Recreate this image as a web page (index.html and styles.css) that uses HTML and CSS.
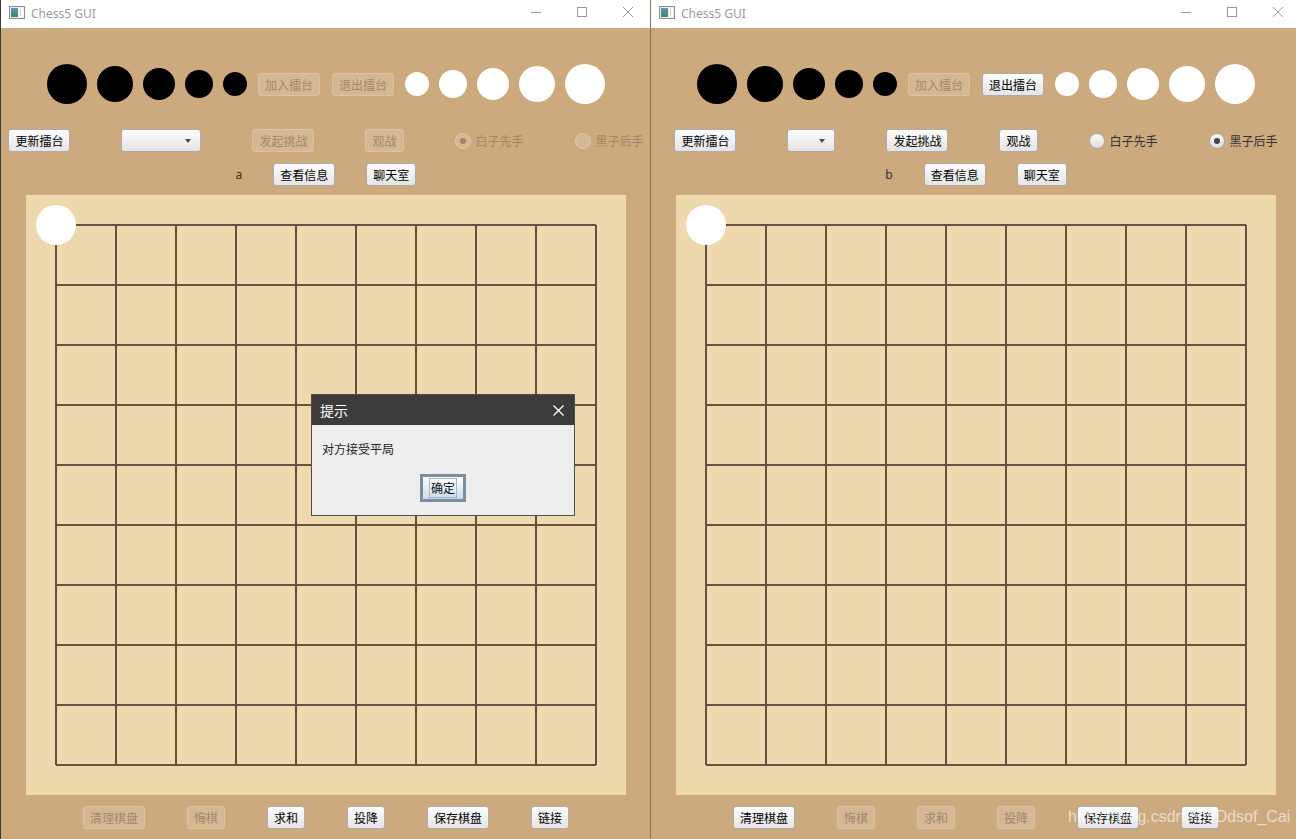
FILE: index.html
```html
<!DOCTYPE html>
<html>
<head>
<meta charset="utf-8">
<title>Chess5 GUI</title>
<link rel="stylesheet" href="styles.css">
</head>
<body>
<div class="desktop">

  <div class="window win-left">
    <div class="titlebar">
      <svg class="appicon" width="16" height="13" viewBox="0 0 16 13"><defs><linearGradient id="ig1" x1="0" y1="0" x2="0" y2="1"><stop offset="0" stop-color="#5a94c8"/><stop offset="1" stop-color="#3b8a58"/></linearGradient></defs><rect x="0.5" y="0.5" width="15" height="12" fill="#eeeeee" stroke="#8e8e8e"/><rect x="2" y="2" width="7" height="9" fill="url(#ig1)"/><rect x="10" y="2" width="4" height="9" fill="#ffffff"/><rect x="11" y="3" width="1" height="7" fill="#c8c8c8"/></svg>
      <span class="title">Chess5 GUI</span>
      <div class="caption">
        <span class="cap"><svg width="10" height="10" viewBox="0 0 10 10"><path d="M0 5.5H10" stroke="#9a9a9a" stroke-width="1"/></svg></span>
        <span class="cap"><svg width="10" height="10" viewBox="0 0 10 10"><rect x="0.5" y="0.5" width="9" height="9" fill="none" stroke="#9a9a9a" stroke-width="1"/></svg></span>
        <span class="cap"><svg width="10" height="10" viewBox="0 0 10 10"><path d="M0 0L10 10M10 0L0 10" stroke="#9a9a9a" stroke-width="1"/></svg></span>
      </div>
    </div>
    <div class="panel">
      <div class="row stones-row">
        <span class="stone black s40"></span>
        <span class="stone black s36"></span>
        <span class="stone black s32"></span>
        <span class="stone black s28"></span>
        <span class="stone black s24"></span>
        <button class="btn pad disabled">加入擂台</button>
        <button class="btn pad disabled">退出擂台</button>
        <span class="stone white s24"></span>
        <span class="stone white s28"></span>
        <span class="stone white s32"></span>
        <span class="stone white s36"></span>
        <span class="stone white s40"></span>
      </div>
      <div class="row controls-row">
        <button class="btn">更新擂台</button>
        <div class="combo wide"><span class="arrow"></span></div>
        <button class="btn disabled">发起挑战</button>
        <button class="btn disabled">观战</button>
        <label class="radio disabled checked"><span class="circle"><span class="dot"></span></span>白子先手</label>
        <label class="radio disabled"><span class="circle"><span class="dot"></span></span>黑子后手</label>
      </div>
      <div class="row info-row">
        <span class="name">a</span>
        <button class="btn">查看信息</button>
        <button class="btn">聊天室</button>
      </div>
      <div class="board">
        <svg class="grid" width="600" height="600" viewBox="0 0 600 600"><path d="M30 30V570M90 30V570M150 30V570M210 30V570M270 30V570M330 30V570M390 30V570M450 30V570M510 30V570M570 30V570M30 30H570M30 90H570M30 150H570M30 210H570M30 270H570M30 330H570M30 390H570M30 450H570M30 510H570M30 570H570" stroke="#63523e" stroke-width="2" fill="none"/></svg>
        <span class="stone white s40 corner"></span>
      </div>
      <div class="row bottom-row">
        <button class="btn disabled">清理棋盘</button>
        <button class="btn disabled">悔棋</button>
        <button class="btn">求和</button>
        <button class="btn">投降</button>
        <button class="btn">保存棋盘</button>
        <button class="btn">链接</button>
      </div>
    </div>

    <div class="dialog">
      <div class="dlg-title">
        <span>提示</span>
        <svg class="dlg-close" width="11" height="11" viewBox="0 0 11 11"><path d="M0.5 0.5L10.5 10.5M10.5 0.5L0.5 10.5" stroke="#ffffff" stroke-width="1.3"/></svg>
      </div>
      <div class="dlg-body">
        <div class="dlg-msg">对方接受平局</div>
        <div class="okbtn"><span>确定</span></div>
      </div>
    </div>
  </div>

  <div class="window win-right">
    <div class="titlebar">
      <svg class="appicon" width="16" height="13" viewBox="0 0 16 13"><defs><linearGradient id="ig2" x1="0" y1="0" x2="0" y2="1"><stop offset="0" stop-color="#5a94c8"/><stop offset="1" stop-color="#3b8a58"/></linearGradient></defs><rect x="0.5" y="0.5" width="15" height="12" fill="#eeeeee" stroke="#8e8e8e"/><rect x="2" y="2" width="7" height="9" fill="url(#ig2)"/><rect x="10" y="2" width="4" height="9" fill="#ffffff"/><rect x="11" y="3" width="1" height="7" fill="#c8c8c8"/></svg>
      <span class="title">Chess5 GUI</span>
      <div class="caption">
        <span class="cap"><svg width="10" height="10" viewBox="0 0 10 10"><path d="M0 5.5H10" stroke="#9a9a9a" stroke-width="1"/></svg></span>
        <span class="cap"><svg width="10" height="10" viewBox="0 0 10 10"><rect x="0.5" y="0.5" width="9" height="9" fill="none" stroke="#9a9a9a" stroke-width="1"/></svg></span>
        <span class="cap"><svg width="10" height="10" viewBox="0 0 10 10"><path d="M0 0L10 10M10 0L0 10" stroke="#9a9a9a" stroke-width="1"/></svg></span>
      </div>
    </div>
    <div class="panel">
      <div class="row stones-row">
        <span class="stone black s40"></span>
        <span class="stone black s36"></span>
        <span class="stone black s32"></span>
        <span class="stone black s28"></span>
        <span class="stone black s24"></span>
        <button class="btn pad disabled">加入擂台</button>
        <button class="btn pad">退出擂台</button>
        <span class="stone white s24"></span>
        <span class="stone white s28"></span>
        <span class="stone white s32"></span>
        <span class="stone white s36"></span>
        <span class="stone white s40"></span>
      </div>
      <div class="row controls-row">
        <button class="btn">更新擂台</button>
        <div class="combo narrow"><span class="arrow"></span></div>
        <button class="btn">发起挑战</button>
        <button class="btn">观战</button>
        <label class="radio"><span class="circle"><span class="dot"></span></span>白子先手</label>
        <label class="radio checked"><span class="circle"><span class="dot"></span></span>黑子后手</label>
      </div>
      <div class="row info-row">
        <span class="name">b</span>
        <button class="btn">查看信息</button>
        <button class="btn">聊天室</button>
      </div>
      <div class="board">
        <svg class="grid" width="600" height="600" viewBox="0 0 600 600"><path d="M30 30V570M90 30V570M150 30V570M210 30V570M270 30V570M330 30V570M390 30V570M450 30V570M510 30V570M570 30V570M30 30H570M30 90H570M30 150H570M30 210H570M30 270H570M30 330H570M30 390H570M30 450H570M30 510H570M30 570H570" stroke="#63523e" stroke-width="2" fill="none"/></svg>
        <span class="stone white s40 corner"></span>
      </div>
      <div class="row bottom-row">
        <button class="btn">清理棋盘</button>
        <button class="btn disabled">悔棋</button>
        <button class="btn disabled">求和</button>
        <button class="btn disabled">投降</button>
        <button class="btn">保存棋盘</button>
        <button class="btn">链接</button>
      </div>
    </div>
  </div>

  <div class="watermark">https://blog.csdn.net/Ddsof_Cai</div>
</div>
</body>
</html>
```

FILE: styles.css
```css
html, body {
  margin: 0;
  padding: 0;
}
body {
  width: 1296px;
  height: 839px;
  overflow: hidden;
  background: #ffffff;
  font-family: "Noto Sans CJK SC", "Noto Sans", sans-serif;
}
.desktop {
  position: relative;
  display: flex;
  width: 1296px;
  height: 839px;
  overflow: hidden;
}
.window {
  position: relative;
  flex: 0 0 651px;
  width: 651px;
  height: 839px;
  box-sizing: border-box;
  border-left: 1px solid #3b3b3b;
  background: #cda97e;
  display: flex;
  flex-direction: column;
}
.win-right {
  margin-left: -1px;
  border-left-color: #8d7459;
}

/* title bar */
.titlebar {
  flex: none;
  height: 28px;
  background: #ffffff;
  display: flex;
  align-items: center;
}
.appicon {
  margin-left: 8px;
  margin-top: -3px;
}
.title {
  margin-left: 6px;
  margin-top: -2px;
  font-family: "Noto Sans", "Open Sans", sans-serif;
  font-size: 12px;
  color: #9b9b9b;
}
.caption {
  margin-left: auto;
  display: flex;
  align-self: stretch;
}
.cap {
  width: 46px;
  height: 28px;
  display: flex;
  justify-content: center;
  align-items: flex-start;
  padding-top: 7px;
  box-sizing: border-box;
}

/* panel */
.panel {
  flex: 1;
  display: flex;
  flex-direction: column;
  align-items: center;
}
.row {
  display: flex;
  align-items: center;
  justify-content: center;
}
.stones-row {
  margin-top: 36px;
  height: 40px;
  gap: 10px;
}
.controls-row {
  margin-top: 25px;
  height: 23px;
  gap: 51px;
}
.info-row {
  margin-top: 11px;
  height: 23px;
  gap: 31px;
}
.bottom-row {
  margin-top: 11px;
  height: 23px;
  gap: 42px;
}

/* stones */
.stone {
  display: block;
  border-radius: 50%;
  flex: none;
}
.stone.black { background: #000000; }
.stone.white { background: #ffffff; }
.s40 { width: 40px; height: 40px; }
.s36 { width: 36px; height: 36px; }
.s32 { width: 32px; height: 32px; }
.s28 { width: 28px; height: 28px; }
.s24 { width: 24px; height: 24px; }

/* buttons */
.btn {
  flex: none;
  height: 23px;
  box-sizing: border-box;
  padding: 0 6px;
  margin: 0;
  border: 1px solid #acacac;
  border-radius: 3px;
  background: linear-gradient(#fdfdfd, #e4e4e4);
  font-family: "Noto Sans CJK SC", sans-serif;
  font-size: 12px;
  line-height: 21px;
  color: #000000;
  white-space: nowrap;
}
.btn.pad {
  margin: 0 1px;
}
.btn.disabled {
  background: #d5b893;
  border-color: #dcc4a3;
  color: #a28868;
}

/* combo box */
.combo {
  flex: none;
  height: 23px;
  box-sizing: border-box;
  border: 1px solid #acacac;
  border-radius: 3px;
  background: linear-gradient(#fdfdfd, #e4e4e4);
  display: flex;
  align-items: center;
  justify-content: flex-end;
}
.combo.wide { width: 80px; }
.combo.narrow { width: 48px; }
.arrow {
  width: 0;
  height: 0;
  border-left: 3.5px solid transparent;
  border-right: 3.5px solid transparent;
  border-top: 4px solid #4a4a4a;
  margin-right: 9px;
}

/* radio */
.radio {
  display: flex;
  align-items: center;
  gap: 5px;
  font-size: 12px;
  line-height: 16px;
  color: #333333;
  white-space: nowrap;
}
.circle {
  width: 16px;
  height: 16px;
  box-sizing: border-box;
  border-radius: 50%;
  border: 1px solid #a9a9a9;
  background: linear-gradient(#fafafa, #dcdcdc);
  display: flex;
  align-items: center;
  justify-content: center;
}
.dot {
  width: 6px;
  height: 6px;
  border-radius: 50%;
  background: transparent;
}
.radio.checked .dot {
  background: #444444;
}
.radio.disabled {
  color: #a28868;
}
.radio.disabled .circle {
  background: #d5b893;
  border-color: #dfc8a8;
}
.radio.disabled.checked .dot {
  background: #9f8465;
}

.name {
  font-family: "Noto Sans", sans-serif;
  font-size: 12px;
  color: #333333;
  line-height: 16px;
}

/* board */
.board {
  position: relative;
  margin-top: 9px;
  width: 600px;
  height: 600px;
  flex: none;
  background: #eed9ae;
}
.grid {
  display: block;
}
.corner {
  position: absolute;
  left: 10px;
  top: 10px;
}

/* dialog */
.dialog {
  position: absolute;
  left: 310px;
  top: 394px;
  width: 264px;
  height: 122px;
  box-sizing: border-box;
  border: 1px solid #4d4d4d;
  background: #eeeeee;
  display: flex;
  flex-direction: column;
}
.dlg-title {
  height: 30px;
  flex: none;
  background: #3b3b3b;
  display: flex;
  align-items: center;
  padding: 0 10px 0 8px;
  color: #ffffff;
  font-size: 14px;
}
.dlg-close {
  margin-left: auto;
}
.dlg-body {
  flex: 1;
  display: flex;
  flex-direction: column;
  align-items: center;
}
.dlg-msg {
  align-self: flex-start;
  margin: 16px 0 0 10px;
  font-size: 12px;
  line-height: 16px;
  color: #222222;
}
.okbtn {
  margin-top: 17px;
  width: 46px;
  height: 28px;
  box-sizing: border-box;
  border: 3px solid #7c8da1;
  background: linear-gradient(#ffffff, #c9d9ea);
  display: flex;
  align-items: center;
  justify-content: center;
}
.okbtn span {
  border: 1px solid #a3b7cd;
  font-size: 12px;
  line-height: 18px;
  color: #111111;
  padding: 0 1px;
}

/* watermark */
.watermark {
  position: absolute;
  left: 1068px;
  top: 806px;
  font-family: "Liberation Sans", Arial, sans-serif;
  font-size: 16px;
  line-height: 22px;
  color: rgba(255, 255, 255, 0.6);
  white-space: nowrap;
}
```
